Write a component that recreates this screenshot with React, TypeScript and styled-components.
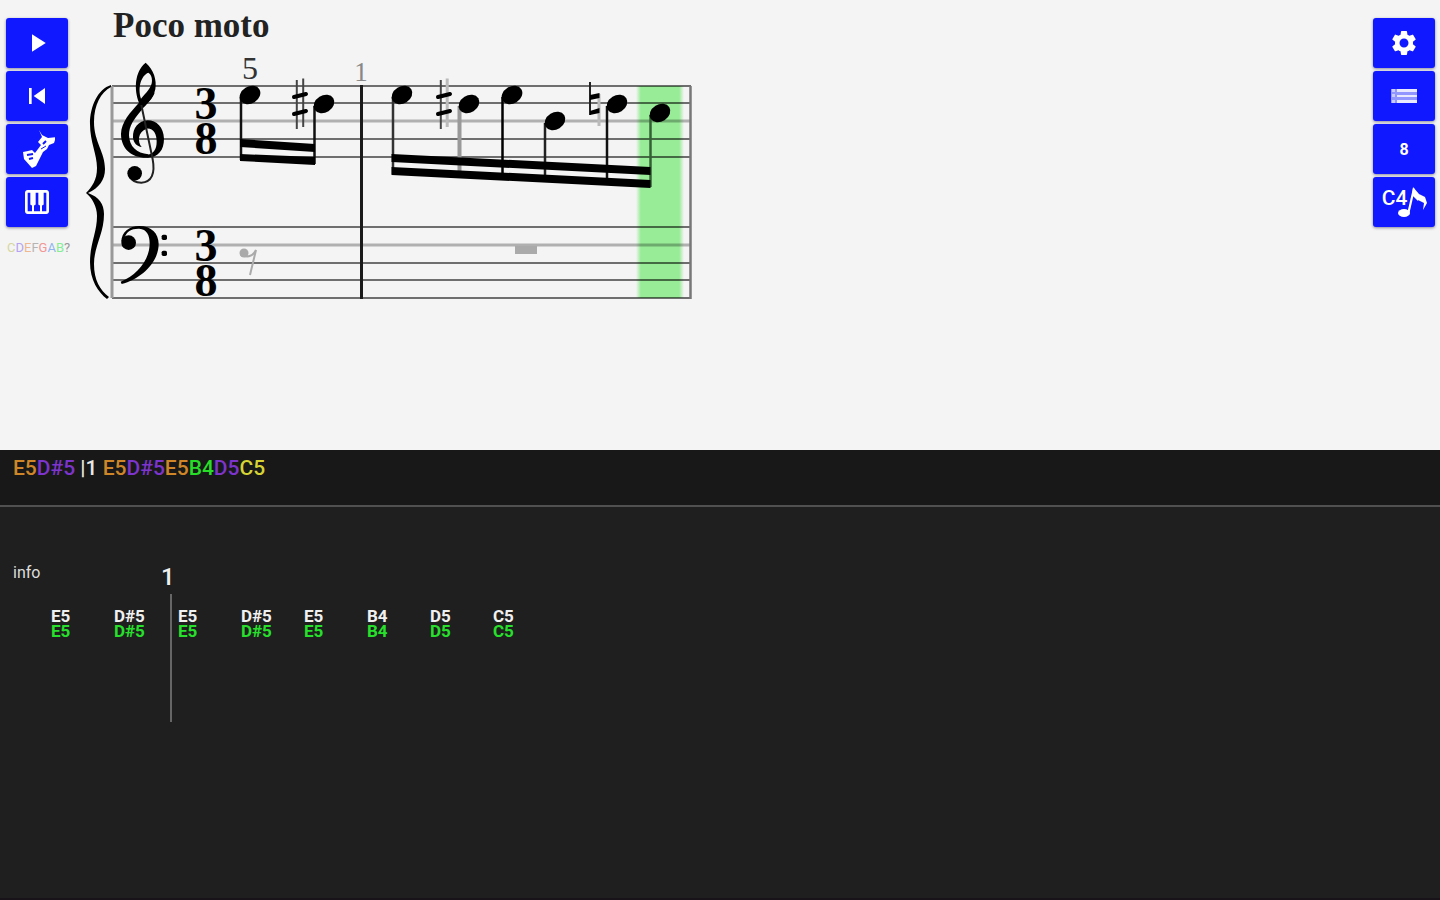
import React from "react";
import styled, { createGlobalStyle } from "styled-components";
import { MdPiano, MdPlayArrow, MdSettings, MdSkipPrevious } from "react-icons/md";

const GlobalStyle = createGlobalStyle`
  * { box-sizing: border-box; }
  body {
    margin: 0;
    background: #1f1f1f;
    font-family: Roboto, "Liberation Sans", Arial, sans-serif;
  }
`;

const Page = styled.div`
  display: flex;
  flex-direction: column;
  min-height: 100vh;
  border-bottom: 2px solid #181318;
`;

const ScorePanel = styled.section`
  display: flex;
  align-items: flex-start;
  min-height: 50vh;
  background: #f4f4f4;
`;

const Toolbar = styled.nav`
  display: flex;
  flex-direction: column;
  flex: none;
  gap: 3px;
  padding: 18px 5px 0 6px;
`;

const ToolButton = styled.button`
  display: flex;
  align-items: center;
  justify-content: center;
  width: 62px;
  height: 50px;
  padding: 0;
  border: 0;
  border-radius: 3px;
  background: #0f18ff;
  box-shadow: 0 1px 3px rgba(0, 0, 60, 0.45);
  color: #fff;
  font-family: inherit;
  font-size: 16px;
  font-weight: 700;
  cursor: pointer;
`;

const PitchLabel = styled.span`
  font-size: 21px;
  font-weight: 500;
  line-height: 28px;
`;

const PitchIcon = styled.span`
  display: flex;
  align-items: flex-start;
  height: 36px;
`;

const Legend = styled.div`
  margin: 10px 0 0 1px;
  width: 66px;
  font-size: 13px;
  font-weight: 400;
  line-height: 16px;
  white-space: nowrap;
`;

const Tinted = styled.span<{ $tint: string }>`
  color: ${(p) => p.$tint};
`;

const Score = styled.main`
  flex: 1;
  min-width: 0;
  padding-left: 2px;
`;

const Title = styled.h1`
  margin: 0 0 0 33px;
  padding-top: 2px;
  font-family: "Liberation Serif", "Times New Roman", serif;
  font-size: 35px;
  font-weight: 700;
  line-height: 48px;
  color: #222;
`;

const Staves = styled.svg`
  display: block;
`;

const Transcript = styled.section`
  min-height: 57px;
  padding: 6px 13px;
  border-bottom: 2px solid #505050;
  background: #181818;
  color: #e8e8e8;
  font-size: 21px;
  font-weight: 500;
  line-height: 24px;
  white-space: pre-wrap;
`;

const Roll = styled.section`
  display: flex;
  flex: 1;
  align-items: flex-start;
  padding: 56px 13px 0;
  background: #1f1f1f;
  color: #f0f0f0;
`;

const PickupMeasure = styled.div`
  width: 157px;
`;

const Measure = styled.div`
  flex: none;
`;

const MeasureHead = styled.div`
  height: 31px;
`;

const Info = styled.span`
  font-size: 16px;
  line-height: 18px;
  color: #ddd;
`;

const MeasureNumber = styled.span`
  display: block;
  margin-left: -9px;
  font-size: 24px;
  font-weight: 500;
  line-height: 28px;
`;

const Lane = styled.div<{ $pickup?: boolean }>`
  display: flex;
  height: 128px;
  padding: 15px 0 0 ${(p) => (p.$pickup ? "38px" : "6px")};
  border-left: ${(p) => (p.$pickup ? "0" : "2px solid #666")};
`;

const Note = styled.div`
  display: flex;
  flex: 0 0 63px;
  flex-direction: column;
  font-size: 17px;
  font-weight: 700;
  line-height: 15px;
`;

const Played = styled.span`
  color: #27e02c;
`;

const TINTS: Record<string, string> = {
  E: "#cf8628",
  D: "#7c34cc",
  B: "#27dd27",
  C: "#d6d334",
};

const PICKUP = ["E5", "D#5"];
const FIRST = ["E5", "D#5", "E5", "B4", "D5", "C5"];

const LEGEND: [string, string][] = [
  ["C", "#d6d6a0"],
  ["D", "#b5a2f2"],
  ["E", "#efb892"],
  ["F", "#b4b4b4"],
  ["G", "#f29696"],
  ["A", "#90b6f0"],
  ["B", "#86ee94"],
  ["?", "#999999"],
];

const TREBLE_LINES = [86, 103, 121, 139, 157];
const BASS_LINES = [227, 245, 263, 280, 298];

const HEADS: [number, number][] = [
  [250, 95],
  [324, 104],
  [402, 95],
  [469, 104],
  [512, 95],
  [555, 121],
  [617, 104],
  [660, 113],
];

const STEMS: [number, number, number, string][] = [
  [241, 97, 160, "#111"],
  [314.5, 106, 164, "#111"],
  [393, 97, 174, "#333"],
  [459.5, 106, 172, "#999"],
  [502.5, 97, 178, "#000"],
  [545, 123, 180, "#222"],
  [607, 106, 182, "#111"],
  [650.5, 115, 187, "#356035"],
];

function Notes({ names }: { names: string[] }) {
  return (
    <>
      {names.map((name, i) => (
        <Tinted key={i} $tint={TINTS[name[0]]}>
          {name}
        </Tinted>
      ))}
    </>
  );
}

function RollNotes({ names }: { names: string[] }) {
  return (
    <>
      {names.map((name, i) => (
        <Note key={i}>
          <span>{name}</span>
          <Played>{name}</Played>
        </Note>
      ))}
    </>
  );
}

function Sharp({ x, faint }: { x: number; faint?: boolean }) {
  return (
    <g transform={`translate(${x} 104)`}>
      <path d="M-3.2 -24V25" stroke="#444" strokeWidth="2" />
      <path d="M3.2 -25.500V23" stroke={faint ? "#bbb" : "#444"} strokeWidth={faint ? 3 : 2} />
      <path d="M-6 -7L6 -10M-6 10L6 7" stroke="#000" strokeWidth="4" strokeLinecap="round" />
    </g>
  );
}

function TrebleClef() {
  return (
    <g transform="translate(80 50) scale(.3333)" fill="#000">
      <path
        fillRule="evenodd"
        d="M177 158C162 120 163 65 197 38C221 58 231 90 226 118C220 145 200 162 183 182C161 208 147 228 147 256C148 290 170 310 205 313V323C160 326 123 300 123 252C124 215 150 188 177 158ZM183 146C198 128 216 112 216 92C216 80 212 72 205 68C184 76 172 112 183 146Z"
      />
      <path d="M203 323C235 322 252 300 252 266C251 232 230 211 203 211C175 212 158 235 159 262C160 280 172 290 185 291C172 275 173 246 200 236C220 234 230 252 230 275C230 298 220 312 203 314Z" />
      <path d="M190 172L178 158L215 128L224 128C218 145 204 158 190 172Z" />
      <path d="M184 165L218 328C226 370 215 397 184 398C168 398 155 392 150 380" fill="none" stroke="#222" strokeWidth="6" />
      <circle cx="164" cy="370" r="22" />
    </g>
  );
}

function BassClef() {
  return (
    <g transform="translate(80 190) scale(.3333)" fill="#000">
      <circle cx="146" cy="158" r="22" />
      <path d="M124 156C124 126 148 108 178 108C214 108 236 130 236 162C236 218 182 268 125 282L122 275C170 256 208 212 209 162C209 134 200 118 178 116C155 115 140 124 133 144Z" />
      <rect x="245" y="134" width="16" height="16" rx="5" />
      <rect x="245" y="182" width="16" height="16" rx="5" />
    </g>
  );
}

function StavesDrawing() {
  return (
    <Staves width="620" height="256" viewBox="80 50 620 256" role="img" aria-label="Piano score, 3/8 time">
      <defs>
        <linearGradient id="cursor">
          <stop offset="0" stopColor="#98ec98" stopOpacity="0" />
          <stop offset="0.1" stopColor="#98ec98" />
          <stop offset="0.9" stopColor="#98ec98" />
          <stop offset="1" stopColor="#98ec98" stopOpacity="0" />
        </linearGradient>
      </defs>
      <rect x="636" y="86" width="48" height="212" fill="url(#cursor)" />
      {[TREBLE_LINES, BASS_LINES].map((lines) =>
        lines.map((y) => {
          const soft = y === 121 || y === 245;
          return (
            <path
              key={y}
              d={`M112 ${y}H691`}
              stroke="#000"
              strokeOpacity={soft ? 0.28 : 0.55}
              strokeWidth={soft ? 3 : 2}
            />
          );
        }),
      )}
      <path d="M112 86V298" stroke="#999" strokeWidth="3" />
      <path d="M690.500 86V299" stroke="#777" strokeWidth="2.500" />
      <path d="M361.500 85V299" stroke="#1a1a1a" strokeWidth="3" />
      <path
        d="M111 85C98 89 90 106 90 124C90 142 97 154 97 168C97 180 92 187 86 193C92 198 97 206 97 216C97 232 90 244 90 262C90 280 98 292 107 299L109 297C100 290 94 280 94 264C94 246 104 234 104 214C104 204 99 197 88 193C99 188 105 180 105 169C105 152 94 142 94 122C94 105 101 92 111 87Z"
        fill="#000"
      />
      <TrebleClef />
      <BassClef />
      <g fontFamily="Liberation Serif, Times New Roman, serif" textAnchor="middle">
        <g fontSize="46" fontWeight="700" fill="#000">
          <text x="206" y="119">3</text>
          <text x="206" y="154">8</text>
          <text x="206" y="261">3</text>
          <text x="206" y="296">8</text>
        </g>
        <text x="250" y="79" fontSize="32" fill="#333">5</text>
        <text x="361" y="81" fontSize="27" fill="#888">1</text>
      </g>
      {STEMS.map(([x, top, bottom, color]) => (
        <path key={x} d={`M${x} ${top}V${bottom}`} stroke={color} strokeWidth={color === "#999" ? 4 : 2.5} />
      ))}
      <path
        d="M240 139L315 144V152L240 147ZM240 154L315 157V165L240 161ZM391.500 154L650.500 167V175L391.500 162ZM391.500 167L650.500 180V188L391.500 175Z"
        fill="#000"
      />
      {HEADS.map(([x, y]) => (
        <ellipse key={x} cx={x} cy={y} rx="11" ry="8.500" transform={`rotate(-32 ${x} ${y})`} fill="#000" />
      ))}
      <Sharp x={300} />
      <Sharp x={444} faint />
      <path d="M590 82V115" stroke="#222" strokeWidth="2" />
      <path d="M599 94V126" stroke="#bbb" strokeWidth="3" />
      <path d="M590 95L599.500 93V98L590 100ZM590 111L599.500 108V113L590 115Z" fill="#000" />
      <circle cx="244" cy="253" r="4.500" fill="#aaa" />
      <path d="M244 256Q252 258 256 250L250 275" fill="none" stroke="#aaa" strokeWidth="2" />
      <rect x="515" y="246" width="22" height="8" fill="#aaa" />
    </Staves>
  );
}

function InstrumentIcon() {
  return (
    <svg width="36" height="42" viewBox="0 0 36 42" fill="#fff" aria-hidden="true">
      <path d="M18 2L21 7L27 10L35 9L33 15L28 17L26 21L22 24L15 38L11 40L3 31L2 24L7 23L11 22L14 25L20 17L17 14L21 9Z" transform="translate(2 0)" />
      <path d="M8 27L14 26M10 31L14 30M24 16L27 13" stroke="#0f18ff" strokeWidth="2" />
      <path d="M22 21L27 18" stroke="#0f18ff" strokeWidth="1" />
    </svg>
  );
}

function RowsIcon() {
  return (
    <svg width="26" height="16" viewBox="0 0 26 16" fill="#fff" aria-hidden="true">
      <path d="M0 1H26V15H0Z" fillOpacity="0.55" />
      <path d="M6 1H26V4H6ZM6 7H26V9H6ZM6 12H26V15H6Z" fillOpacity="0.8" />
      <path d="M1 1H4V4H1ZM1 6H4V9H1ZM1 12H4V15H1Z" fillOpacity="0.5" />
    </svg>
  );
}

const NoteSvg = styled.svg`
  margin: 0 -3px 0 -10px;
`;

function FlaggedNote() {
  return (
    <NoteSvg width="32" height="36" viewBox="0 0 32 36" fill="#fff" aria-hidden="true">
      <ellipse cx="7" cy="29" rx="6" ry="4" />
      <path d="M10 30L16 4L18 5L12 31Z" />
      <path d="M16 3L22 10L21 17L15 11ZM20 9L28 13L30 19L26 26L27 19L19 15Z" />
    </NoteSvg>
  );
}

export default function App() {
  return (
    <>
      <GlobalStyle />
      <Page>
        <ScorePanel>
          <Toolbar aria-label="Playback">
            <ToolButton type="button" aria-label="Play"><MdPlayArrow size={30} /></ToolButton>
            <ToolButton type="button" aria-label="Back to start"><MdSkipPrevious size={32} /></ToolButton>
            <ToolButton type="button" aria-label="Instrument"><InstrumentIcon /></ToolButton>
            <ToolButton type="button" aria-label="Keyboard"><MdPiano size={32} /></ToolButton>
            <Legend>
              {LEGEND.map(([name, tint]) => (
                <Tinted key={name} $tint={tint}>{name}</Tinted>
              ))}
            </Legend>
          </Toolbar>
          <Score>
            <Title>Poco moto</Title>
            <StavesDrawing />
          </Score>
          <Toolbar aria-label="Options">
            <ToolButton type="button" aria-label="Settings"><MdSettings size={30} /></ToolButton>
            <ToolButton type="button" aria-label="Song list"><RowsIcon /></ToolButton>
            <ToolButton type="button">8</ToolButton>
            <ToolButton type="button">
              <PitchIcon>
                <PitchLabel>C4</PitchLabel>
                <FlaggedNote />
              </PitchIcon>
            </ToolButton>
          </Toolbar>
        </ScorePanel>
        <Transcript>
          <Notes names={PICKUP} />
          {" |1 "}
          <Notes names={FIRST} />
        </Transcript>
        <Roll>
          <PickupMeasure>
            <MeasureHead><Info>info</Info></MeasureHead>
            <Lane $pickup><RollNotes names={PICKUP} /></Lane>
          </PickupMeasure>
          <Measure>
            <MeasureHead><MeasureNumber>1</MeasureNumber></MeasureHead>
            <Lane><RollNotes names={FIRST} /></Lane>
          </Measure>
        </Roll>
      </Page>
    </>
  );
}
